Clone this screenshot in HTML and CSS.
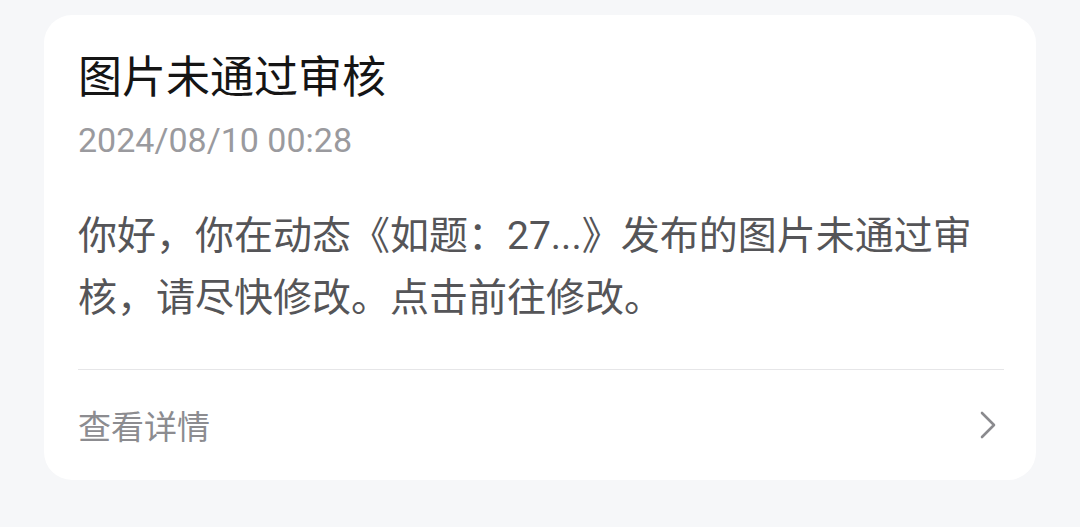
FILE: index.html
```html
<!DOCTYPE html>
<html lang="zh-CN">
<head>
<meta charset="utf-8">
<link rel="stylesheet" href="styles.css">
</head>
<body>
<div class="page">
  <div class="card">
    <div class="title">图片未通过审核</div>
    <div class="time">2024/08/10 00:28</div>
    <div class="content">你好，你在动态《如题：27...》发布的图片未通过审核，请尽快修改。点击前往修改。</div>
    <div class="divider"></div>
    <div class="footer">
      <span class="more">查看详情</span>
      <svg class="chevron" width="16" height="28" viewBox="0 0 16 28">
        <polyline points="2,2 14,14 2,26" fill="none" stroke="#8a8a8e" stroke-width="2.6" stroke-linecap="round" stroke-linejoin="round"/>
      </svg>
    </div>
  </div>
</div>
</body>
</html>
```

FILE: styles.css
```css
html, body {
  margin: 0;
  padding: 0;
  background: #f6f7f9;
}
body {
  font-family: "Noto Sans CJK SC", "Noto Sans", sans-serif;
}
.page {
  padding: 15px 44px;
}
.card {
  background: #ffffff;
  border-radius: 28px;
  padding: 29px 32px 0 34px;
  height: 465px;
  box-sizing: border-box;
}
.title {
  font-size: 44px;
  font-weight: 400;
  line-height: 60px;
  color: #151515;
}
.time {
  margin-top: 14px;
  font-family: Roboto, "Noto Sans", sans-serif;
  font-size: 34px;
  line-height: 44px;
  color: #9a9a9e;
}
.content {
  margin-top: 43px;
  font-family: Roboto, "Noto Sans CJK SC", sans-serif;
  font-size: 39px;
  line-height: 62px;
  color: #555558;
}
.divider {
  margin-top: 40px;
  height: 1px;
  background: #e6e6e8;
}
.footer {
  height: 110px;
  display: flex;
  align-items: center;
  justify-content: space-between;
  padding-right: 8px;
}
.more {
  font-size: 33px;
  color: #8c8c90;
}
.chevron {
  display: block;
}
```
